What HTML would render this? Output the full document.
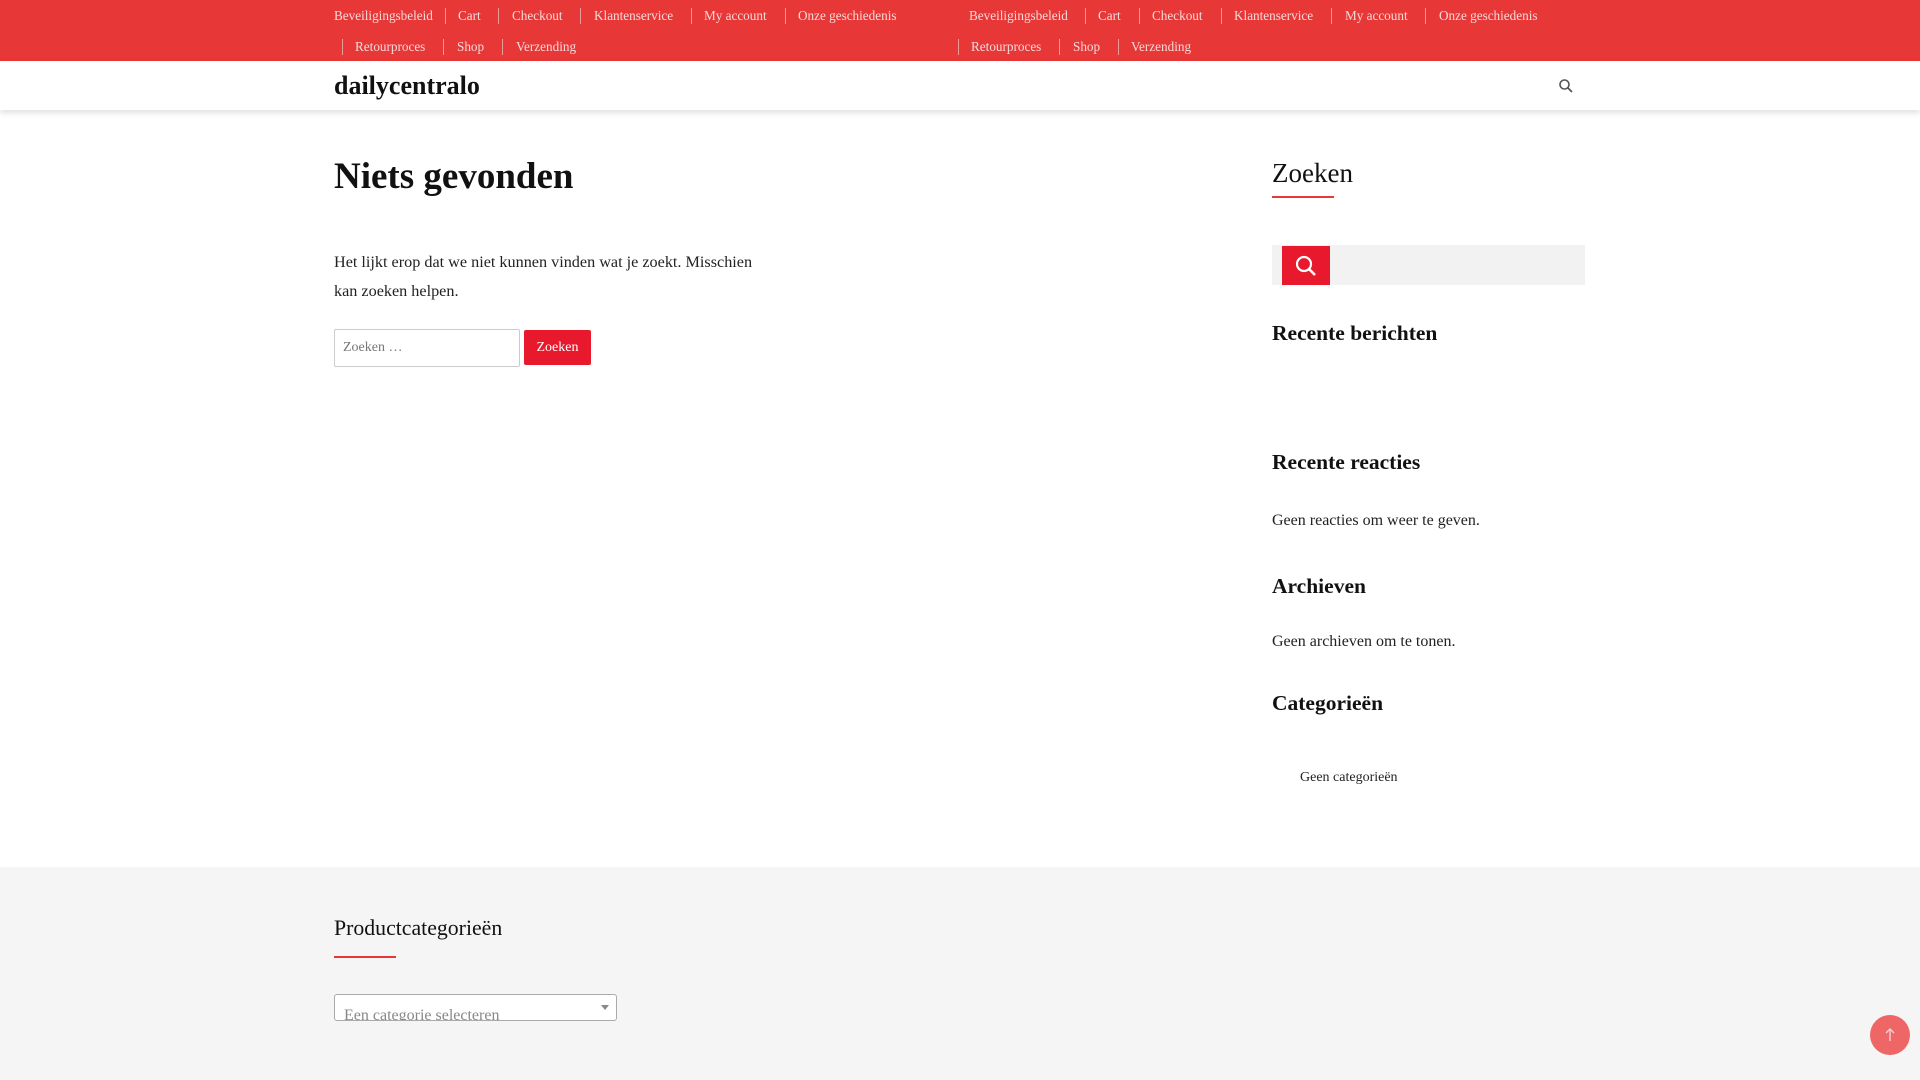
<!DOCTYPE html>
<html><head><meta charset="utf-8"><style>
*{margin:0;padding:0;box-sizing:border-box}
body{width:1920px;height:1080px;overflow:hidden;background:#fff;font-family:"Liberation Serif",serif;color:#222;position:relative}
.a{position:absolute;white-space:nowrap}
.top{position:absolute;left:0;top:0;width:1920px;height:61px;background:#e83737}
.n{position:absolute;color:#f6dada;font-size:13.2px;line-height:16px}
.s{position:absolute;width:1px;height:16px;background:#f09999}
.hdr{position:absolute;left:0;top:61px;width:1920px;height:49px;background:#fff;box-shadow:0 3px 6px rgba(0,0,0,.12)}
.foot{position:absolute;left:0;top:867px;width:1920px;height:213px;background:#f5f5f5}
</style></head><body>
<div class="top">
<span class="n" style="left:334px;top:8px">Beveiligingsbeleid</span><span class="s" style="left:445px;top:8px"></span>
<span class="n" style="left:458px;top:8px">Cart</span><span class="s" style="left:498px;top:8px"></span>
<span class="n" style="left:512px;top:8px">Checkout</span><span class="s" style="left:580px;top:8px"></span>
<span class="n" style="left:594px;top:8px">Klantenservice</span><span class="s" style="left:691px;top:8px"></span>
<span class="n" style="left:704px;top:8px">My account</span><span class="s" style="left:785px;top:8px"></span>
<span class="n" style="left:798px;top:8px">Onze geschiedenis</span>
<span class="s" style="left:342px;top:39px"></span><span class="n" style="left:355px;top:39px">Retourproces</span>
<span class="s" style="left:443px;top:39px"></span><span class="n" style="left:457px;top:39px">Shop</span>
<span class="s" style="left:502px;top:39px"></span><span class="n" style="left:516px;top:39px">Verzending</span>
<span class="n" style="left:969px;top:8px">Beveiligingsbeleid</span><span class="s" style="left:1085px;top:8px"></span>
<span class="n" style="left:1098px;top:8px">Cart</span><span class="s" style="left:1139px;top:8px"></span>
<span class="n" style="left:1152px;top:8px">Checkout</span><span class="s" style="left:1221px;top:8px"></span>
<span class="n" style="left:1234px;top:8px">Klantenservice</span><span class="s" style="left:1331px;top:8px"></span>
<span class="n" style="left:1345px;top:8px">My account</span><span class="s" style="left:1425px;top:8px"></span>
<span class="n" style="left:1439px;top:8px">Onze geschiedenis</span>
<span class="s" style="left:958px;top:39px"></span><span class="n" style="left:971px;top:39px">Retourproces</span>
<span class="s" style="left:1059px;top:39px"></span><span class="n" style="left:1073px;top:39px">Shop</span>
<span class="s" style="left:1118px;top:39px"></span><span class="n" style="left:1131px;top:39px">Verzending</span>
</div>
<div class="hdr">
<div class="a" style="left:334px;top:10px;font-size:26px;font-weight:bold;color:#111">dailycentralo</div>
<svg class="a" style="left:1558px;top:17px" width="16" height="16" viewBox="0 0 16 16"><circle cx="6.5" cy="6.5" r="4.5" fill="none" stroke="#555" stroke-width="1.6"/><path d="M10 10l4 4" stroke="#555" stroke-width="1.8"/></svg>
</div>
<div class="a" style="left:334px;top:155px;font-size:37px;font-weight:bold;color:#111">Niets gevonden</div>
<div class="a" style="left:334px;top:248px;font-size:16.2px;line-height:29px;white-space:normal;width:440px;color:#222">Het lijkt erop dat we niet kunnen vinden wat je zoekt. Misschien kan zoeken helpen.</div>
<div class="a" style="left:334px;top:329px;width:186px;height:38px;border:1px solid #ccc;border-radius:2px;font-size:14px;color:#777;padding:10px 8px">Zoeken …</div>
<div class="a" style="left:524px;top:330px;width:67px;height:35px;background:#e8192c;color:#fff;font-size:14px;text-align:center;line-height:35px;border-radius:2px">Zoeken</div>
<div class="a" style="left:1272px;top:158px;font-size:27px;color:#111">Zoeken</div>
<div class="a" style="left:1272px;top:196px;width:62px;height:2px;background:#e83737"></div>
<div class="a" style="left:1272px;top:245px;width:313px;height:40px;background:#f2f2f2"></div>
<div class="a" style="left:1282px;top:246px;width:48px;height:39px;background:#e8192c"></div>
<svg class="a" style="left:1294px;top:254px" width="24" height="24" viewBox="0 0 24 24"><circle cx="10" cy="10" r="7" fill="none" stroke="#fff" stroke-width="2.2"/><path d="M15 15l6 6" stroke="#fff" stroke-width="2.6"/></svg>
<div class="a" style="left:1272px;top:321px;font-size:21.5px;font-weight:bold;color:#111">Recente berichten</div>
<div class="a" style="left:1272px;top:450px;font-size:21.5px;font-weight:bold;color:#111">Recente reacties</div>
<div class="a" style="left:1272px;top:512px;font-size:16px;color:#222">Geen reacties om weer te geven.</div>
<div class="a" style="left:1272px;top:574px;font-size:21.5px;font-weight:bold;color:#111">Archieven</div>
<div class="a" style="left:1272px;top:633px;font-size:16px;color:#222">Geen archieven om te tonen.</div>
<div class="a" style="left:1272px;top:691px;font-size:21.5px;font-weight:bold;color:#111">Categorieën</div>
<div class="a" style="left:1300px;top:770px;font-size:14px;color:#222">Geen categorieën</div>
<div class="foot"></div>
<div class="a" style="left:334px;top:916px;font-size:21.8px;color:#111">Productcategorieën</div>
<div class="a" style="left:334px;top:956px;width:62px;height:2px;background:#e83737"></div>
<div class="a" style="left:334px;top:994px;width:283px;height:27px;border:1px solid #aaa;border-radius:3px;background:#fff;font-size:16px;color:#888;padding:13px 0 0 9px;overflow:hidden;line-height:16px">Een categorie selecteren</div>
<div class="a" style="left:601px;top:1005px;width:0;height:0;border-left:4px solid transparent;border-right:4px solid transparent;border-top:5px solid #888"></div>
<div class="a" style="left:1870px;top:1015px;width:40px;height:40px;border-radius:50%;background:#ee6666"></div>
<svg class="a" style="left:1880px;top:1025px" width="20" height="20" viewBox="0 0 20 20"><path d="M10 16V4M6 8l4-4 4 4" fill="none" stroke="#f7d0d0" stroke-width="1.4"/></svg>
</body></html>
